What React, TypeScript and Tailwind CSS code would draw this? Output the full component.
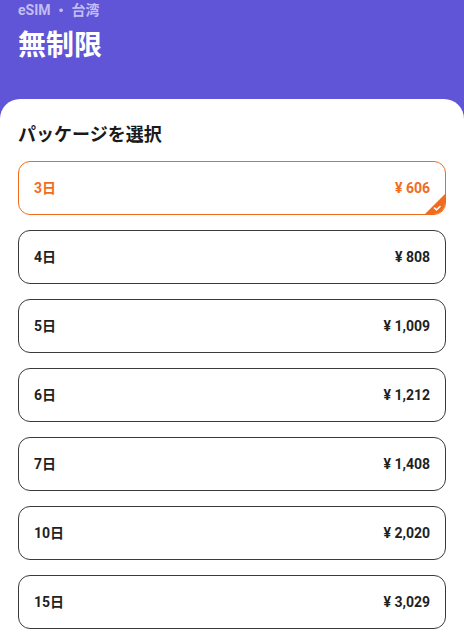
const PACKAGES = [
  { days: "3日", price: "¥ 606" },
  { days: "4日", price: "¥ 808" },
  { days: "5日", price: "¥ 1,009" },
  { days: "6日", price: "¥ 1,212" },
  { days: "7日", price: "¥ 1,408" },
  { days: "10日", price: "¥ 2,020" },
  { days: "15日", price: "¥ 3,029" },
];

const FONT = { fontFamily: 'Roboto, "Noto Sans CJK JP", sans-serif' };

export default function App() {
  const selected = 0;
  return (
    <div className="min-h-screen w-[464px] bg-[#5f55d6]" style={FONT}>
      {/* Header */}
      <div className="h-[100px] px-[18px]">
        <div className="-mt-[1px] text-[14px] font-bold leading-[22px] text-[#c3bdf3]">eSIM ・ 台湾</div>
        <h1 className="mt-[9px] text-[28px] font-bold leading-[32px] text-white">無制限</h1>
      </div>

      {/* Sheet */}
      <div className="rounded-t-[20px] bg-white px-[18px] pb-6 pt-[24px]">
        <h2 className="text-[18px] font-bold leading-[24px] text-[#1a1a1a]">パッケージを選択</h2>
        <div className="mt-[14px] flex flex-col gap-[15px]">
          {PACKAGES.map((p, i) => {
            const on = i === selected;
            return (
              <button
                key={p.days}
                className={`relative flex h-[54px] items-center justify-between overflow-hidden rounded-[12px] border px-[15px] text-[14px] font-bold ${
                  on ? "border-[#f26b1d] text-[#f26b1d]" : "border-[#3a3a3a] text-[#1f1f1f]"
                }`}
              >
                <span>{p.days}</span>
                <span>{p.price}</span>
                {on && (
                  <span className="absolute bottom-0 right-0 h-[20px] w-[20px] bg-[#f26b1d] [clip-path:polygon(100%_0,100%_100%,0_100%)]">
                    <svg viewBox="0 0 20 20" className="absolute inset-0 h-full w-full">
                      <path d="M9.5 14 L11.5 15.8 L15 12.5" fill="none" stroke="white" strokeWidth="1.6" strokeLinecap="round" strokeLinejoin="round" />
                    </svg>
                  </span>
                )}
              </button>
            );
          })}
        </div>
      </div>
    </div>
  );
}
